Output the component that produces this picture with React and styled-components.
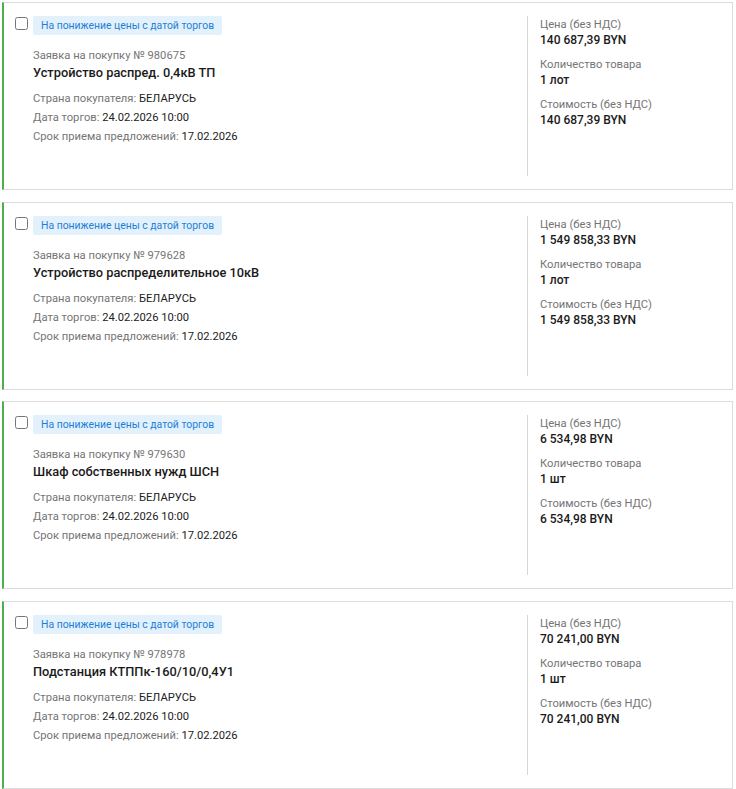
import React from 'react';
import styled, { createGlobalStyle } from 'styled-components';

const GlobalStyle = createGlobalStyle`
  body {
    margin: 0;
    background: #fff;
    font-family: Roboto, "Liberation Sans", Arial, sans-serif;
    color: #212121;
  }
`;

const List = styled.div`
  display: flex;
  flex-direction: column;
  gap: 11.67px;
  padding: 2px 3px 0 2px;
`;

const Card = styled.article`
  display: flex;
  height: 188px;
  box-sizing: border-box;
  border: 1px solid #dcdcdc;
  border-left: 2px solid #4caf50;
  background: #fff;
`;

const Main = styled.div`
  flex: 1;
  padding: 13px 0 0 11px;
`;

const TopRow = styled.div`
  display: flex;
  align-items: flex-start;
  gap: 5px;
`;

const Check = styled.input`
  width: 13px;
  height: 13px;
  margin: 1px 0 0 0;
`;

const Badge = styled.span`
  display: inline-flex;
  align-items: center;
  height: 19px;
  padding: 0 8px;
  background: #e3f1fd;
  color: #1e7fd6;
  font-size: 10.4px;
  border-radius: 2px;
`;

const Body = styled.div`
  padding-left: 18px;
  margin-top: 13px;
`;

const Number = styled.div`
  font-size: 11.2px;
  line-height: 16px;
  color: #757575;
`;

const Title = styled.div`
  font-size: 12.8px;
  line-height: 18px;
  font-weight: 500;
  color: #1a1a1a;
`;

const Facts = styled.div`
  margin-top: 7px;
`;

const Fact = styled.div`
  font-size: 11.2px;
  line-height: 19px;
  color: #757575;

  b {
    font-weight: 400;
    color: #212121;
  }
`;

const Side = styled.aside`
  width: 192px;
  margin: 13px 0 13px;
  padding: 1px 0 0 12px;
  border-left: 1px solid #d6d6d6;
`;

const Pair = styled.div`
  margin-bottom: 9px;
`;

const Label = styled.div`
  font-size: 11.2px;
  line-height: 16px;
  color: #757575;
`;

const Value = styled.div`
  font-size: 12px;
  line-height: 15px;
  font-weight: 500;
  color: #1a1a1a;
`;

const lots = [
  { id: '980675', title: 'Устройство распред. 0,4кВ ТП', price: '140 687,39 BYN', qty: '1 лот', total: '140 687,39 BYN' },
  { id: '979628', title: 'Устройство распределительное 10кВ', price: '1 549 858,33 BYN', qty: '1 лот', total: '1 549 858,33 BYN' },
  { id: '979630', title: 'Шкаф собственных нужд ШСН', price: '6 534,98 BYN', qty: '1 шт', total: '6 534,98 BYN' },
  { id: '978978', title: 'Подстанция КТППк-160/10/0,4У1', price: '70 241,00 BYN', qty: '1 шт', total: '70 241,00 BYN' },
];

function LotCard({ lot }) {
  return (
    <Card>
      <Main>
        <TopRow>
          <Check type="checkbox" />
          <Badge>На понижение цены с датой торгов</Badge>
        </TopRow>
        <Body>
          <Number>Заявка на покупку № {lot.id}</Number>
          <Title>{lot.title}</Title>
          <Facts>
            <Fact>Страна покупателя: <b>БЕЛАРУСЬ</b></Fact>
            <Fact>Дата торгов: <b>24.02.2026 10:00</b></Fact>
            <Fact>Срок приема предложений: <b>17.02.2026</b></Fact>
          </Facts>
        </Body>
      </Main>
      <Side>
        <Pair>
          <Label>Цена (без НДС)</Label>
          <Value>{lot.price}</Value>
        </Pair>
        <Pair>
          <Label>Количество товара</Label>
          <Value>{lot.qty}</Value>
        </Pair>
        <Pair>
          <Label>Стоимость (без НДС)</Label>
          <Value>{lot.total}</Value>
        </Pair>
      </Side>
    </Card>
  );
}

export default function App() {
  return (
    <>
      <GlobalStyle />
      <List>
        {lots.map((lot) => (
          <LotCard key={lot.id} lot={lot} />
        ))}
      </List>
    </>
  );
}
